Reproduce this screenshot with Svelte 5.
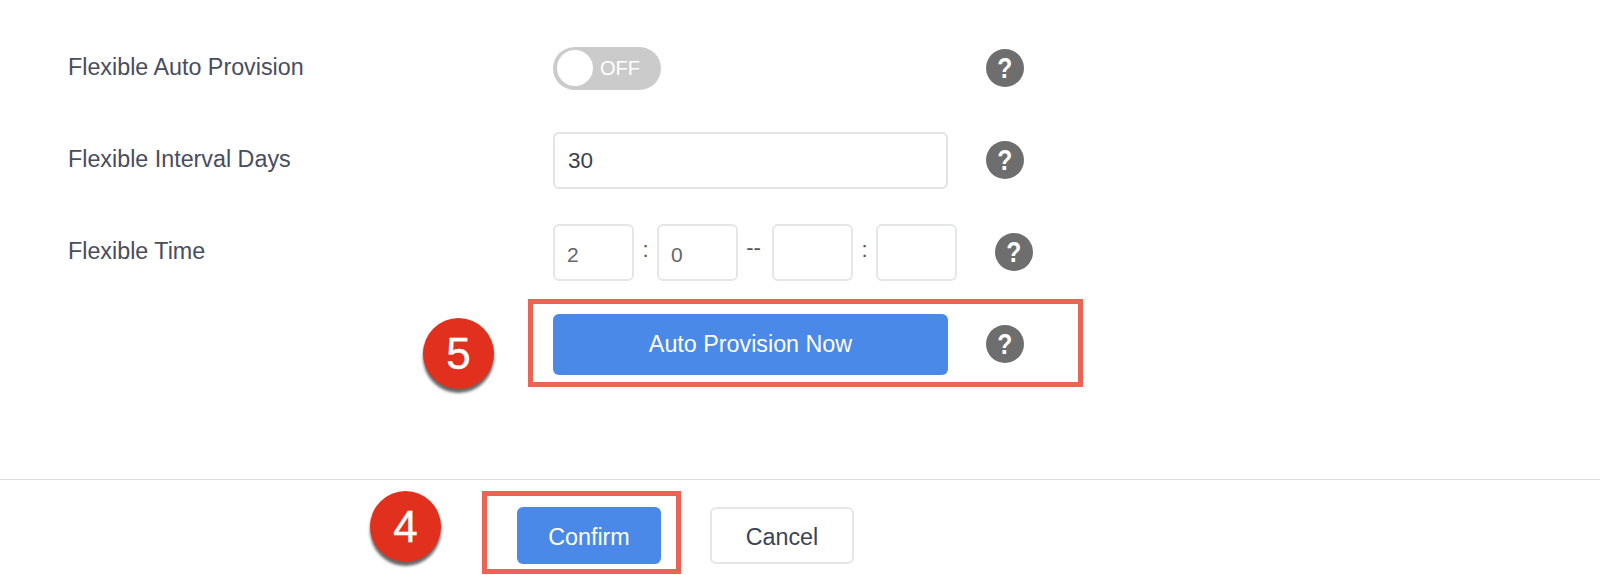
<script>
  let autoProvision = $state(false);
  let intervalDays = $state('30');
  let time = $state(['2', '0', '', '']);
</script>

{#snippet help()}
  <span class="help"><span class="mark-q">?</span></span>
{/snippet}

<div class="page">
  <div class="form">
    <div class="row">
      <div class="label">Flexible Auto Provision</div>
      <div class="control">
        <button class="toggle" onclick={() => (autoProvision = !autoProvision)}>
          <span class="knob"></span>
          <span class="toggle-text">OFF</span>
        </button>
      </div>
      {@render help()}
    </div>

    <div class="row">
      <div class="label">Flexible Interval Days</div>
      <div class="control">
        <input class="field" bind:value={intervalDays} />
      </div>
      {@render help()}
    </div>

    <div class="row">
      <div class="label">Flexible Time</div>
      <div class="time">
        <input class="small" bind:value={time[0]} />
        <span class="sep colon">:</span>
        <input class="small" bind:value={time[1]} />
        <span class="sep dash">--</span>
        <input class="small" bind:value={time[2]} />
        <span class="sep colon">:</span>
        <input class="small" bind:value={time[3]} />
      </div>
      {@render help()}
    </div>

    <div class="row">
      <div class="label"></div>
      <div class="control">
        <button class="primary wide">Auto Provision Now</button>
      </div>
      {@render help()}
      <div class="mark mark-now"></div>
      <div class="badge badge-5">5</div>
    </div>
  </div>

  <div class="footer">
    <button class="primary confirm">Confirm</button>
    <button class="cancel">Cancel</button>
    <div class="mark mark-confirm"></div>
    <div class="badge badge-4">4</div>
  </div>
</div>

<style>
  :global(body) {
    margin: 0;
    background: #fff;
    font-family: "Liberation Sans", Arial, sans-serif;
  }

  .page {
    width: 1600px;
    height: 575px;
    overflow: hidden;
    color: #3c4356;
  }

  .form {
    padding: 22px 0 0 68px;
    height: 479px;
    box-sizing: border-box;
  }

  .row {
    display: flex;
    align-items: center;
    height: 92px;
    position: relative;
  }

  .label {
    width: 485px;
    font-size: 23.3px;
    margin-top: -1px;
    color: #484d5e;
  }

  .control {
    width: 395px;
    margin-right: 38px;
  }

  .toggle {
    display: flex;
    align-items: center;
    width: 108px;
    height: 43px;
    padding: 0 0 0 4px;
    border: 0;
    border-radius: 22px;
    background: #cbcbcb;
  }

  .knob {
    width: 36px;
    height: 36px;
    border-radius: 50%;
    background: #fff;
  }

  .toggle-text {
    margin-left: 7px;
    color: #fff;
    font: 20px "Liberation Sans", Arial, sans-serif;
  }

  .field {
    display: block;
    width: 100%;
    height: 57px;
    padding: 2px 13px 0;
    box-sizing: border-box;
    border: 2px solid #e1e3e5;
    border-radius: 6px;
    color: #3a3f50;
    font: 22.5px "Liberation Sans", Arial, sans-serif;
    outline: none;
  }

  .time {
    display: flex;
    align-items: center;
    width: 404px;
    margin-right: 38px;
  }

  .small {
    width: 81px;
    height: 57px;
    padding: 6px 12px 0;
    box-sizing: border-box;
    border: 2px solid #e4e6e8;
    border-radius: 6px;
    color: #666;
    font: 21px "Liberation Sans", Arial, sans-serif;
    outline: none;
  }

  .sep {
    text-align: center;
    font-size: 22px;
    color: #555;
  }

  .colon {
    width: 23px;
    margin-top: -4px;
  }

  .dash {
    width: 34px;
    margin-top: -8px;
    text-indent: -3px;
  }

  .help {
    width: 38px;
    height: 38px;
    flex: none;
    display: flex;
    align-items: center;
    justify-content: center;
    border-radius: 50%;
    background: #6e6e6e;
    color: #fff;
    font-size: 29px;
    font-weight: 700;
  }

  .mark-q {
    display: block;
    transform: scaleX(0.85);
  }

  .primary {
    border: 0;
    border-radius: 6px;
    background: #4a89e8;
    color: #fff;
    font: 23.3px "Liberation Sans", Arial, sans-serif;
  }

  .wide {
    display: block;
    width: 100%;
    height: 61px;
  }

  .footer {
    position: relative;
    height: 96px;
    box-sizing: border-box;
    padding: 27px 0 0 517px;
    display: flex;
    align-items: flex-start;
    gap: 49px;
    border-top: 1px solid #dcdcdc;
  }

  .confirm,
  .cancel {
    width: 144px;
    height: 57px;
    padding-top: 4px;
  }

  .cancel {
    background: #fff;
    border: 2px solid #e4e6e8;
    border-radius: 6px;
    color: #3c4356;
    font: 23.3px "Liberation Sans", Arial, sans-serif;
  }

  /* annotations drawn over the screenshot */
  .mark {
    position: absolute;
    box-sizing: border-box;
    border: 5px solid #ec6353;
    pointer-events: none;
  }

  .mark-now {
    left: 460px;
    top: 1px;
    width: 555px;
    height: 88px;
  }

  .mark-confirm {
    left: 482px;
    top: 11px;
    width: 199px;
    height: 83px;
  }

  .badge {
    position: absolute;
    width: 71px;
    height: 71px;
    border-radius: 50%;
    display: flex;
    align-items: center;
    justify-content: center;
    background: #e2301f;
    color: #fff;
    font-size: 44px;
    -webkit-text-stroke: 0.4px #fff;
    box-shadow: 0 4px 3px rgba(0, 0, 0, 0.6);
  }

  .badge-5 {
    left: 355px;
    top: 20px;
  }

  .badge-4 {
    left: 370px;
    top: 11px;
  }
</style>
